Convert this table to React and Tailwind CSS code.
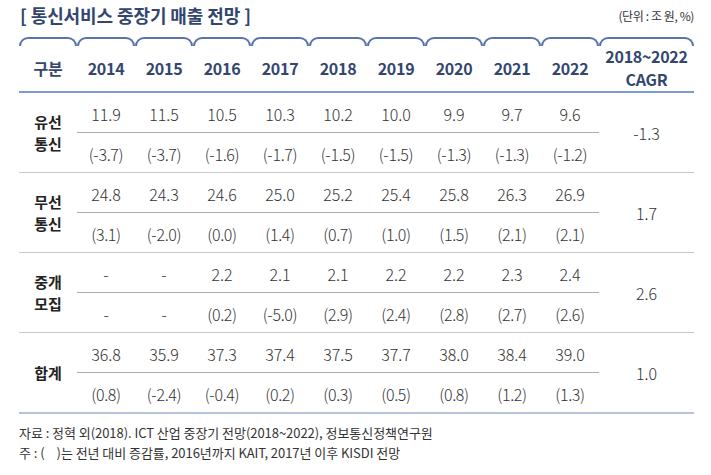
const years = ["2014", "2015", "2016", "2017", "2018", "2019", "2020", "2021", "2022"];

const groups = [
  {
    label: ["유선", "통신"],
    values: ["11.9", "11.5", "10.5", "10.3", "10.2", "10.0", "9.9", "9.7", "9.6"],
    rates: ["(-3.7)", "(-3.7)", "(-1.6)", "(-1.7)", "(-1.5)", "(-1.5)", "(-1.3)", "(-1.3)", "(-1.2)"],
    cagr: "-1.3",
  },
  {
    label: ["무선", "통신"],
    values: ["24.8", "24.3", "24.6", "25.0", "25.2", "25.4", "25.8", "26.3", "26.9"],
    rates: ["(3.1)", "(-2.0)", "(0.0)", "(1.4)", "(0.7)", "(1.0)", "(1.5)", "(2.1)", "(2.1)"],
    cagr: "1.7",
  },
  {
    label: ["중개", "모집"],
    values: ["-", "-", "2.2", "2.1", "2.1", "2.2", "2.2", "2.3", "2.4"],
    rates: ["-", "-", "(0.2)", "(-5.0)", "(2.9)", "(2.4)", "(2.8)", "(2.7)", "(2.6)"],
    cagr: "2.6",
  },
  {
    label: ["합계"],
    values: ["36.8", "35.9", "37.3", "37.4", "37.5", "37.7", "38.0", "38.4", "39.0"],
    rates: ["(0.8)", "(-2.4)", "(-0.4)", "(0.2)", "(0.3)", "(0.5)", "(0.8)", "(1.2)", "(1.3)"],
    cagr: "1.0",
  },
];

const font = { fontFamily: '"Noto Sans CJK KR", "Noto Sans", sans-serif' };

function Tab() {
  return <div className="h-[9px] rounded-t-[9px] border-t-2 border-x-2 border-[#5b74ab]" />;
}

function HeadCell({ children, wide }) {
  return (
    <div className={wide ? "w-[95px]" : "w-[58px]"}>
      <Tab />
      <div
        className={`h-[45px] flex items-center justify-center text-center text-[16px] font-bold text-[#34466e] tracking-[-0.3px] ${
          wide ? "leading-[23px] pb-[1px]" : "leading-[21px]"
        }`}
      >
        {children}
      </div>
    </div>
  );
}

function Group({ g, last }) {
  return (
    <div className={`flex ${last ? "border-b-2 border-[#b4c3df]" : "border-b border-[#c9c9c9]"}`}>
      <div className="w-[58px] flex flex-col items-center justify-center text-[15px] font-bold leading-[22px] text-[#222]">
        {g.label.map((l) => (
          <div key={l}>{l}</div>
        ))}
      </div>
      <div className="w-[522px] flex flex-col">
        <div className="h-[40px] grid grid-cols-9 items-center border-b border-[#ababab]">
          {g.values.map((v, i) => (
            <div key={i} className="text-center text-[16px] font-light text-[#333] pt-[3px]">{v}</div>
          ))}
        </div>
        <div className="h-[39px] grid grid-cols-9 items-center">
          {g.rates.map((v, i) => (
            <div key={i} className="text-center text-[16px] font-light text-[#333] tracking-[-0.3px] pt-[2px]">{v}</div>
          ))}
        </div>
      </div>
      <div className="w-[95px] flex items-center justify-center text-[16px] font-light text-[#333]">
        {g.cagr}
      </div>
    </div>
  );
}

export default function App() {
  return (
    <div className="w-[711px] h-[475px] bg-white pl-[19px] pt-[2px]" style={font}>
      <div className="w-[675px] flex items-end justify-between h-[26px]">
        <div className="text-[18px] font-bold text-[#33466e] tracking-[-0.1px] pl-[1px] leading-[26px]">[ 통신서비스 중장기 매출 전망 ]</div>
        <div className="text-[12px] text-[#333] tracking-[-0.4px] pb-[3px]">(단위 : 조 원, %)</div>
      </div>
      <div className="w-[675px] mt-[9px]">
        <div className="flex border-b-2 border-[#7d9bd0]">
          <HeadCell>구분</HeadCell>
          {years.map((y) => (
            <HeadCell key={y}>{y}</HeadCell>
          ))}
          <HeadCell wide>
            <span>
              2018~2022
              <br />
              CAGR
            </span>
          </HeadCell>
        </div>
        {groups.map((g, i) => (
          <Group key={i} g={g} last={i === groups.length - 1} />
        ))}
      </div>
      <div className="mt-[9px] text-[13px] leading-[20px] text-[#333] tracking-[-0.05px]">
        <div>자료 : 정혁 외(2018). ICT 산업 중장기 전망(2018~2022), 정보통신정책연구원</div>
        <div>
          주 : (<span className="inline-block w-[12px]" />)는 전년 대비 증감률, 2016년까지 KAIT, 2017년 이후 KISDI 전망
        </div>
      </div>
    </div>
  );
}
